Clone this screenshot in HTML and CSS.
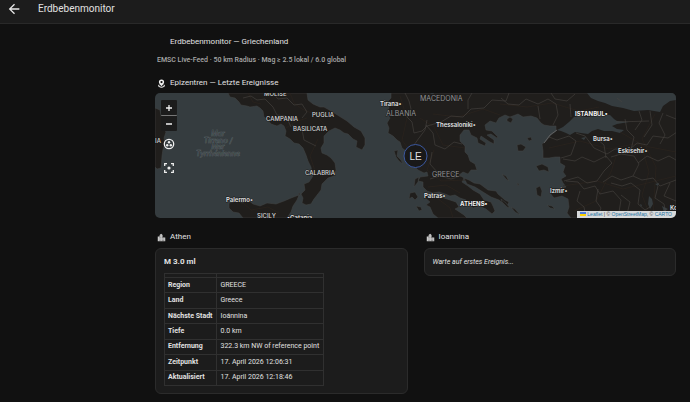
FILE: index.html
```html
<!DOCTYPE html>
<html lang="de">
<head>
<meta charset="utf-8">
<meta name="viewport" content="width=device-width, initial-scale=1">
<title>Erdbebenmonitor</title>
<link rel="stylesheet" href="styles.css">
</head>
<body>
<header class="topbar">
  <button class="back" type="button" aria-label="Zurück">
    <svg viewBox="3 3 18 18"><path d="M20 11v2H8l5.500 5.500-1.420 1.420L4.160 12l7.920-7.920L13.500 5.500 8 11z"/></svg>
  </button>
  <h1 class="title">Erdbebenmonitor</h1>
</header>
<main class="content">
  <h2 class="heading heading-plain">Erdbebenmonitor — Griechenland</h2>
  <p class="subtitle">EMSC Live-Feed · 50 km Radius · Mag ≥ 2.5 lokal / 6.0 global</p>
  <h2 class="heading">
    <svg class="heading-icon" viewBox="0 0 24 24"><path fill-rule="evenodd" d="M12 1a7 7 0 0 0-7 7c0 5 7 11 7 11s7-6 7-11a7 7 0 0 0-7-7m0 4a3 3 0 1 1 0 6 3 3 0 0 1 0-6M3 18c0 3 4 5 9 5s9-2 9-5c0-1.500-1-2.700-2.500-3.500l-1.500 2c1 .5 1.500 1 1.500 1.500 0 1-2.500 2.500-6.500 2.500S5.500 19 5.500 18c0-.5.500-1 1.500-1.500l-1.500-2C4 15.300 3 16.500 3 18"/></svg>
    Epizentren — Letzte Ereignisse
  </h2>
  <section class="map">
    <svg class="map-canvas" viewBox="155 93 521 125" preserveAspectRatio="xMidYMid slice">
      <g class="land">
        <path d="M155 108L160 110 161 116 163 122 163 128 166 132 164 138 165 144 163 149 162 156 161 168 157 169 155 167z"/>
        <path d="M228 93L230 97 235 98 239 102 241 105 247 106 250 107 257 106 260 108 263 111 264 117 268 120 271 124 277 126 281 124 284 126 286 131 285 136 290 139 294 143 299 144 303 148 306 155 308 161 311 167 312 174 313 176 309 182 304 184 305 190 301 194 303 198 302 203 306 205 311 204 314 199 321 190 322 184 328 178 334 176 336 170 335 163 331 158 327 155 322 153 321 148 324 143 324 136 329 131 335 128 340 130 344 133 348 134 353 139 357 141 356 147 362 150 365 145 365 138 361 131 354 127 347 121 339 116 331 111 324 107 320 107 313 104 308 100 307 93z"/>
        <path d="M229 203L234 202 236 199 242 203 248 200 253 204 260 206 267 203 276 204 284 201 291 198 299 195 297 200 293 206 291 212 287 218 243 218 239 213 233 212 229 208z"/>
        <path d="M391 93L391 98 388 101 389 108 387 113 390 118 387 123 389 128 388 133 393 136 397 140 400 142 402 148 406 151 408 156 411 162 415 167 418 170 424 173 427 172 428 176 420 177 418 181 423 182 423 187 427 191 433 193 439 192 445 194 450 196 455 195 460 198 466 200 465 205 471 206 473 208 479 206 486 209 492 214 495 211 493 206 491 202 484 200 480 194 473 190 468 186 462 182 464 178 459 175 463 172 468 174 471 170 477 170 475 164 470 161 468 155 465 152 465 146 460 141 460 135 464 130 469 130 471 135 477 138 478 143 485 146 486 143 480 139 481 136 490 142 494 144 494 140 487 135 491 134 497 138 498 137 492 131 486 130 485 125 490 121 496 123 499 118 505 115 510 117 518 114 523 117 531 116 537 118 541 123 544 125 550 126 556 126 556 131 551 135 545 142 542 144 543 151 543 158 549 158 555 157 560 157 560 163 565 166 563 172 566 176 561 179 563 183 566 187 561 188 557 191 552 188 550 193 554 198 562 196 568 199 569 207 567 213 571 218L676 218V93z"/>
        <path d="M423 196L428 194 438 196 444 198 450 200 456 202 459 207 455 209 464 215 467 218H438L433 214 430 207 426 205 430 202z"/>
        <path d="M464 178L469 180 474 183 480 184 488 190 496 191 498 194 505 200 509 202 507 206 499 200 491 197 483 192 475 187 467 184z"/>
        <path d="M394 151L398 150 397 156 401 160 403 164 399 161 396 157zM415 179l4-2-1 5-4 5zM410 193l5-1 3 5-3 3-3-3-3 2zM416 206l5 1 1 3-3 1zM507 119l3-2 3 2-2 4-4-2zM517 145l4-1 5 3-3 4-5 0zM536 166l6-2 6 3 1 5-5-2-5 1zM536 188l4-2 2 5-1 6-4-2zM502 174l4 2 3 5-3-2zM501 199l5 4 4 5-3-1-5-5zM511 207l4 2 5 6-5-3zM527 138l4-1 1 3-3 1zM547 205l5 1 3 3-5-1zM517 183l2 1-1 2zM298 194l2-1v2z"/>
      </g>
      <g class="water">
        <path d="M587 93L591 98 598 101 605 103 612 106 623 108 634 111 648 110 660 112 663 106 670 101 676 100V93z"/>
        <path d="M557 130L563 127 569 122 574 117 581 115 585 117 594 116 604 115 610 115 614 119 617 121 629 122 617 124 612 126 617 129 624 130 620 133 612 131 604 131 598 129 592 131 588 134 581 133 575 132 570 135 566 133 561 131z"/>
        <path d="M581 138l5-1-2 3zM649 196l3 3 1 5-3 5-2-5zM662 206l6 3-4 3zM655 184l4-1-1 3zM640 204l2 1-1 2zM430 94l3-2 1 2z"/>
      </g>
      <path class="roads" d="M248 93l5 9 8 2M290 93l4 10 8 6 14 6 12 14M286 128l9-6 12-4M318 139l-8 17 5 15 8 6M243 203l8 7 17-3 11 6M400 96l7 22-5 22 14 20M420 118l14 9 9 18 22 3M433 114l25 3 25-8 17 6M434 150l-7 20 14 11 25-1M428 187l18-2 14 8M437 198l13 10 3 10M500 104l27 3 25-4 27 8 20-4M549 148l31-7 29 8 25-5 42 8M563 186l34-5 26 8 53-13M574 211l22-10 15-29 8-25M620 132l21 12 8 28-7 23 9 23M655 114l-13 25 14 28-3 50"/>
      <path class="borders" d="M243 98l8-2 6 4 8-1 8 8 4 8 9 1 5 11M273 93l5 6 9-1 7 7 8-1 5 8-5 6M292 125l10 4 2 11 12 6M405 93l4 8 2 8-4 8 5 5 2 11 8-2 5-5 14-4 10-6 12 1 8-8 13-1 8-8 14 1 3-8M427 120l-2 10-6 8-5 7 2 8M426 125l7 8 2 12 10 4 9-7 8 2M432 152l-2 12 8 9 10-2 9 5M430 179l10-3 11 3 10-3M468 109v-9l4-7M501 98l7 6 11 1 7-6 12 5 10-5 8 5 2 11-5 10M538 106l2 13M551 93l4 6 12 2 8-7M570 104l1 13M549 137l8 3 12-4 7 5-5 14-10 3M576 133l9 3 9 12 13 6 8-5 14 1 8-7 10 2 6-9 15 2 9-6M563 159l12 2 7-4 12 5 12-6 6 7-8 8-7 10-10 2-9-6-14 4M566 181l12 1 6 7 11-3 5 8 13-3 8 9-3 18M606 158l-2-13-8-7M611 157l10-3 13 2 5 8-6 12-12 4-9-4-9 6M638 163l9-7 11 5 11-5 7 4M633 176l9 4 11-2 7 8 16-6M611 183l11 3 9-3 9 7-2 14 7 6 5-3M580 191l-3 10 7 6 2 11M598 189l-2 12 5 7-4 10M621 195l9 7-4 16M625 119l2 11 7 7-3 13M639 111l3 9-7 10M650 111l2 14-8 12M663 113l-4 10 6 12-5 9M676 119l-10-4M616 122l33-1M658 186l-3 12 9 6 3 14M670 183l-6 13 12 5M617 98l5 4"/>
      <path class="outline" d="M544 143l6-8 7-5"/>
      <g class="label label-region">
        <text x="264" y="96">MOLISE</text>
        <text x="266" y="121">CAMPANIA</text>
        <text x="312" y="117">PUGLIA</text>
        <text x="293" y="131">BASILICATA</text>
        <text x="305" y="175">CALABRIA</text>
        <text x="257" y="218">SICILY</text>
        <text x="155" y="143">IA</text>
      </g>
      <g class="label label-country">
        <text x="420" y="101">MACEDONIA</text>
        <text x="386" y="116">ALBANIA</text>
        <text x="432" y="177">GREECE</text>
      </g>
      <g class="label label-city">
        <text x="380" y="106">Tirana•</text>
        <text x="436" y="127">Thessaloniki•</text>
        <text x="424" y="198">Patras•</text>
        <text x="593" y="141">Bursa•</text>
        <text x="618" y="153">Eskisehir•</text>
        <text x="550" y="193">Izmir•</text>
        <text x="226" y="202">Palermo•</text>
        <text x="287" y="220">•Catania</text>
        <text x="670" y="210">Ko</text>
      </g>
      <g class="label label-capital">
        <text x="460" y="206">ATHENS•</text>
        <text x="575" y="116">ISTANBUL•</text>
      </g>
      <g class="label label-sea">
        <text x="218" y="136">Mar</text>
        <text x="218" y="143">Tirreno /</text>
        <text x="218" y="149">Mer</text>
        <text x="218" y="156">Tyrrhénienne</text>
      </g>
      <circle class="marker" cx="415.500" cy="156" r="11.500"/>
      <text class="marker-text" x="415.500" y="160">LE</text>
    </svg>
    <div class="map-controls">
      <button class="zoom" type="button" aria-label="Vergrößern"><svg viewBox="0 0 8 8"><path d="M4 1v6M1 4h6"/></svg></button>
      <button class="zoom" type="button" aria-label="Verkleinern"><svg viewBox="0 0 8 8"><path d="M1 4h6"/></svg></button>
      <button class="tool" type="button" aria-label="Marker gruppieren"><svg viewBox="0 0 12 12"><circle class="ring" cx="6" cy="6" r="4.700"/><circle cx="6" cy="4.200" r="1.200"/><circle cx="4.200" cy="7.200" r="1.200"/><circle cx="7.800" cy="7.200" r="1.200"/></svg></button>
      <button class="tool" type="button" aria-label="Fokus zurücksetzen"><svg viewBox="0 0 12 12"><circle cx="6" cy="6" r="1.600"/><path class="ring" d="M1.700 4V1.700H4M8 1.700h2.300V4M10.300 8v2.300H8M4 10.300H1.700V8"/></svg></button>
    </div>
    <div class="attribution">
      <a href="#leaflet"><svg class="flag" viewBox="0 0 6 4"><path fill="#4c7be1" d="M0 0h6v2H0z"/><path fill="#ffd500" d="M0 2h6v2H0z"/></svg> Leaflet</a> | © <a href="#osm">OpenStreetMap</a>, © <a href="#carto">CARTO</a>
    </div>
  </section>
  <div class="columns">
    <section>
      <h2 class="heading">
        <svg class="heading-icon city" viewBox="0 0 24 24"><path d="M2 9h5V5l4-3 4 3v7h7v10H2z"/><path class="windows" d="M8 7v14M14 7v14M18 15v6"/></svg>
        Athen
      </h2>
      <div class="card">
        <h3 class="magnitude">M 3.0 ml</h3>
        <table class="details">
          <thead><tr><td></td><td></td></tr></thead>
          <tbody>
            <tr><th scope="row">Region</th><td>GREECE</td></tr>
            <tr><th scope="row">Land</th><td>Greece</td></tr>
            <tr><th scope="row">Nächste Stadt</th><td>Ioánnina</td></tr>
            <tr><th scope="row">Tiefe</th><td>0.0 km</td></tr>
            <tr><th scope="row">Entfernung</th><td>322.3 km NW of reference point</td></tr>
            <tr><th scope="row">Zeitpunkt</th><td>17. April 2026 12:06:31</td></tr>
            <tr><th scope="row">Aktualisiert</th><td>17. April 2026 12:18:46</td></tr>
          </tbody>
        </table>
      </div>
    </section>
    <section>
      <h2 class="heading">
        <svg class="heading-icon city" viewBox="0 0 24 24"><path d="M2 9h5V5l4-3 4 3v7h7v10H2z"/><path class="windows" d="M8 7v14M14 7v14M18 15v6"/></svg>
        Ioannina
      </h2>
      <div class="card"><p class="waiting">Warte auf erstes Ereignis...</p></div>
    </section>
  </div>
</main>
</body>
</html>
```
FILE: styles.css
```css
* { box-sizing: border-box; }
body {
  margin: 0;
  background: #111;
  color: #e1e1e1;
  font: 7px/9px Roboto, sans-serif;
}
h1, h2, h3, p { margin: 0; font-weight: 400; }
button { padding: 0; border: 0; background: none; color: inherit; }
svg { display: block; }

.topbar {
  display: flex;
  align-items: center;
  gap: 18px;
  height: 24px;
  padding: 0 8px 6px;
  background: #1c1c1c;
  border-bottom: 1px solid #292929;
}
.back { width: 12px; height: 12px; }
.back svg { width: 12px; height: 12px; fill: #e8e8e8; }
.title { font-size: 10px; line-height: 12px; }

.content { padding: 12px 14px 8px 155px; }
.heading {
  display: flex;
  align-items: center;
  gap: 4px;
  height: 12px;
  padding-left: 2px;
  font-size: 8px;
  line-height: 12px;
}
.heading-plain { padding-left: 15px; }
.heading-icon { width: 9px; height: 9px; fill: #f0f0f0; }
.heading-icon.city { fill: #ccc; }
.windows { fill: none; stroke: #444; stroke-width: 2; stroke-dasharray: 2 2; }
.subtitle { margin: 8px 0 12px; padding-left: 2px; color: #a8a8a8; font-weight: 500; }

.map {
  position: relative;
  height: 125px;
  margin: 4px 0 13px;
  overflow: hidden;
  border-radius: 5px;
  background: #353c3f;
}
.map-canvas { width: 100%; height: 100%; }
.land { fill: #201e1c; stroke: #454746; stroke-width: 0.5; }
.water { fill: #353c3f; }
.roads { fill: none; stroke: #2d251e; stroke-width: 0.6; }
.borders { fill: none; stroke: #484442; stroke-width: 0.6; }
.outline { fill: none; stroke: #6a6a69; stroke-width: 0.8; }
.label { font-family: Inter, sans-serif; font-size: 6px; paint-order: stroke; stroke: #1a1a1a; stroke-width: 1px; }
.label-region { fill: #d8d8d8; font-weight: 500; }
.label-country { fill: #949494; font-size: 7px; }
.label-city { fill: #e4e4e4; font-weight: 600; }
.label-capital { fill: #f4f4f4; font-weight: 700; }
.label-sea { fill: #30383b; stroke: #626b6e; stroke-width: 0.6px; font-size: 7px; font-style: italic; text-anchor: middle; }
.marker { fill: #191919; stroke: #3b589f; stroke-width: 1; }
.marker-text { fill: #e1e1e1; font: 10px "Liberation Sans", sans-serif; text-anchor: middle; }

.map-controls {
  position: absolute;
  top: 7px;
  left: 6px;
  display: flex;
  flex-direction: column;
  align-items: center;
}
.zoom { display: grid; place-items: center; width: 16px; height: 15px; background: #1c1c1c; border-radius: 1px; }
.zoom + .zoom { height: 16px; border-top: 1px solid #777; }
.zoom svg { width: 8px; height: 8px; fill: none; stroke: #f2f2f2; stroke-width: 1.3; }
.tool { margin-top: 7px; }
.tool + .tool { margin-top: 12px; }
.tool svg { width: 12px; height: 12px; fill: #eee; }
.tool .ring { fill: none; stroke: #eee; stroke-width: 1.3; }

.attribution {
  position: absolute;
  right: 0;
  bottom: 0;
  padding: 0 4px 0 3px;
  background: #d7d9da;
  color: #444;
  font: 5px/7px "Liberation Sans", sans-serif;
  white-space: nowrap;
}
.attribution a { color: #1f74a3; text-decoration: none; }
.flag { display: inline-block; width: 6px; height: 4px; }

.columns { display: grid; grid-template-columns: 1fr 1fr; gap: 16px; align-items: start; }
.card {
  margin-top: 5px;
  padding: 8px 8px 7px;
  background: #1c1c1c;
  border: 1px solid #2b2b2b;
  border-radius: 6px;
}
.magnitude { font-size: 8px; line-height: 9px; font-weight: 700; }
.details { height: 113px; margin-top: 7px; border-collapse: collapse; }
.details th, .details td { padding: 0 4px 0 3px; border: 1px solid #303030; text-align: left; white-space: nowrap; }
.details th { font-weight: 700; }
.details thead td { height: 4px; line-height: 0; }
.waiting { padding: 1px 0; font-style: italic; }
```
